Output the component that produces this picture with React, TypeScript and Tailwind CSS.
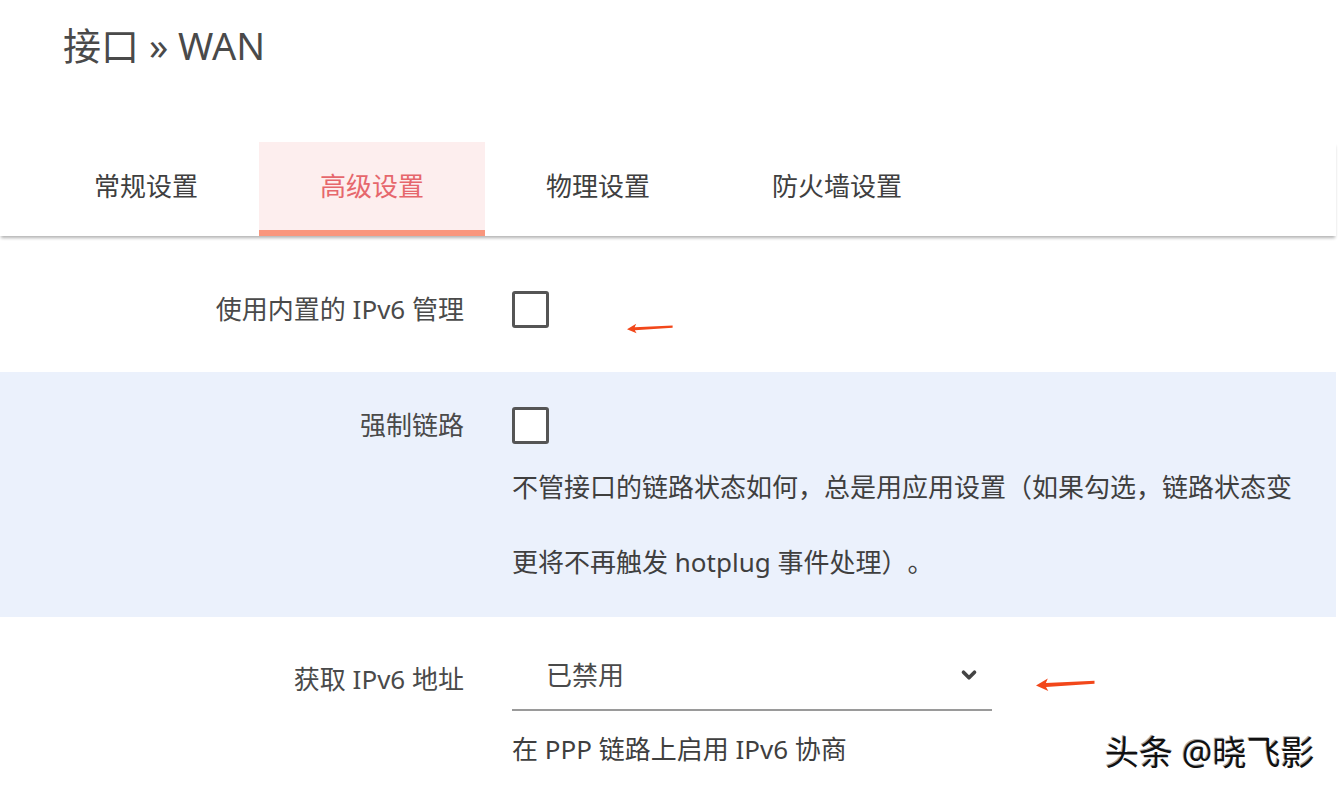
import React from "react";
import { ChevronDown } from "lucide-react";

const font = { fontFamily: '"Noto Sans", "Noto Sans CJK SC", sans-serif' };

const tabs = ["常规设置", "高级设置", "物理设置", "防火墙设置"];

const Arrow = ({ className }: { className: string }) => (
  <svg className={className} viewBox="0 0 60 14" fill="#f2471a">
    <path d="M0 8.5 L12 1.5 L10 6 L59.5 3.6 L59.5 6.8 L10.2 10 L12.5 14 Z" />
  </svg>
);

const Checkbox = () => (
  <div className="w-[37px] h-[37px] border-[3px] border-[#555555] rounded-[3px] bg-white" />
);

const App = () => {
  const active = 1;

  return (
    <div className="relative w-[1340px] h-[798px] bg-white overflow-hidden text-[#4a4a4a] [text-spacing-trim:space-all]" style={font}>
      <div className="w-[1336px]">
        {/* title */}
        <div className="h-[142px] pl-[63px] pt-[17px]">
          <h1 className="text-[38px] leading-[56px] text-[#4a4a4a]">接口 » WAN</h1>
        </div>

        {/* tabs */}
        <div className="flex pl-[33px] bg-white shadow-[0_3px_3px_-1px_rgba(0,0,0,0.3)] relative z-10">
          {tabs.map((t, i) => (
            <div
              key={t}
              className={
                i === active
                  ? "px-[61px] h-[94px] flex items-center text-[26px] text-[#e6676c] bg-[#fdeeee] border-b-[6px] border-[#f9967d]"
                  : "px-[61px] h-[94px] flex items-center text-[26px] text-[#3f3f3f] pb-[6px]"
              }
            >
              {t}
            </div>
          ))}
        </div>

        {/* row 1 */}
        <div className="grid grid-cols-[464px_1fr] gap-x-[48px] pt-[55px] pb-[44px]">
          <div className="text-right text-[26px] leading-[37px]">使用内置的 IPv6 管理</div>
          <div>
            <Checkbox />
          </div>
        </div>

        {/* row 2 */}
        <div className="grid grid-cols-[464px_1fr] gap-x-[48px] pt-[35px] pb-[17px] bg-[#ebf1fc]">
          <div className="text-right text-[26px] leading-[37px]">强制链路</div>
          <div>
            <Checkbox />
            <p className="mt-[6px] w-[800px] text-[26px] leading-[75px] text-[#3f3f3f]">
              不管接口的链路状态如何，总是用应用设置（如果勾选，链路状态变更将不再触发 hotplug 事件处理）。
            </p>
          </div>
        </div>

        {/* row 3 */}
        <div className="grid grid-cols-[464px_1fr] gap-x-[48px] pt-[24px]">
          <div className="text-right text-[26px] leading-[70px] pt-[3px]">获取 IPv6 地址</div>
          <div>
            <div className="w-[480px] h-[70px] border-b-2 border-[#9a9a9a] flex items-center justify-between pl-[34px] pr-[12px] text-[26px] text-[#4a4a4a]">
              <span>已禁用</span>
              <ChevronDown className="w-[22px] h-[22px] text-[#444444]" strokeWidth={4} />
            </div>
            <p className="mt-[20px] text-[26px] leading-[36px] text-[#3f3f3f]">在 PPP 链路上启用 IPv6 协商</p>
          </div>
        </div>
      </div>

      {/* annotation arrows */}
      <Arrow className="absolute left-[627px] top-[322px] w-[46px] h-[12px]" />
      <Arrow className="absolute left-[1036px] top-[677px] w-[59px] h-[14px]" />

      {/* watermark */}
      <div
        className="absolute left-[1105px] top-[731px] text-[34px] leading-[42px] text-[#111111]"
        style={{ textShadow: "2px 2px 0 #ffffff, -1px -1px 0 #aaaaaa" }}
      >
        头条 @晓飞影
      </div>
    </div>
  );
};

export default App;
